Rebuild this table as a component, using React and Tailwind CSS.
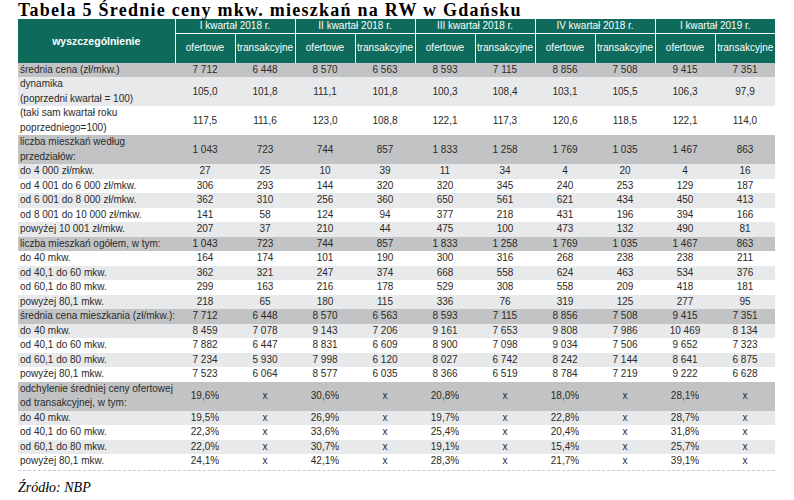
import React from 'react'

const quarters = ['I kwartał 2018 r.', 'II kwartał 2018 r.', 'III kwartał 2018 r.', 'IV kwartał 2018 r.', 'I kwartał 2019 r.']

// type: d = dark gray, l = light gray, w = white; tall = two-line label
const rows = [
  { label: 'średnia cena (zł/mkw.)', t: 'd', v: ['7 712', '6 448', '8 570', '6 563', '8 593', '7 115', '8 856', '7 508', '9 415', '7 351'] },
  { label: ['dynamika', '(poprzedni kwartał = 100)'], t: 'l', v: ['105,0', '101,8', '111,1', '101,8', '100,3', '108,4', '103,1', '105,5', '106,3', '97,9'] },
  { label: ['(taki sam kwartał roku', 'poprzedniego=100)'], t: 'w', v: ['117,5', '111,6', '123,0', '108,8', '122,1', '117,3', '120,6', '118,5', '122,1', '114,0'] },
  { label: ['liczba mieszkań według', 'przedziałów:'], t: 'd', v: ['1 043', '723', '744', '857', '1 833', '1 258', '1 769', '1 035', '1 467', '863'] },
  { label: 'do 4 000 zł/mkw.', t: 'l', v: ['27', '25', '10', '39', '11', '34', '4', '20', '4', '16'] },
  { label: 'od 4 001 do 6 000 zł/mkw.', t: 'w', v: ['306', '293', '144', '320', '320', '345', '240', '253', '129', '187'] },
  { label: 'od 6 001 do 8 000 zł/mkw.', t: 'l', v: ['362', '310', '256', '360', '650', '561', '621', '434', '450', '413'] },
  { label: 'od 8 001 do 10 000 zł/mkw.', t: 'w', v: ['141', '58', '124', '94', '377', '218', '431', '196', '394', '166'] },
  { label: 'powyżej 10 001 zł/mkw.', t: 'l', v: ['207', '37', '210', '44', '475', '100', '473', '132', '490', '81'] },
  { label: 'liczba mieszkań ogółem, w tym:', t: 'd', v: ['1 043', '723', '744', '857', '1 833', '1 258', '1 769', '1 035', '1 467', '863'] },
  { label: 'do 40 mkw.', t: 'w', v: ['164', '174', '101', '190', '300', '316', '268', '238', '238', '211'] },
  { label: 'od 40,1 do 60 mkw.', t: 'l', v: ['362', '321', '247', '374', '668', '558', '624', '463', '534', '376'] },
  { label: 'od 60,1 do 80 mkw.', t: 'w', v: ['299', '163', '216', '178', '529', '308', '558', '209', '418', '181'] },
  { label: 'powyżej 80,1 mkw.', t: 'l', v: ['218', '65', '180', '115', '336', '76', '319', '125', '277', '95'] },
  { label: 'średnia cena mieszkania (zł/mkw.):', t: 'd', v: ['7 712', '6 448', '8 570', '6 563', '8 593', '7 115', '8 856', '7 508', '9 415', '7 351'] },
  { label: 'do 40 mkw.', t: 'l', v: ['8 459', '7 078', '9 143', '7 206', '9 161', '7 653', '9 808', '7 986', '10 469', '8 134'] },
  { label: 'od 40,1 do 60 mkw.', t: 'w', v: ['7 882', '6 447', '8 831', '6 609', '8 900', '7 098', '9 034', '7 506', '9 652', '7 323'] },
  { label: 'od 60,1 do 80 mkw.', t: 'l', v: ['7 234', '5 930', '7 998', '6 120', '8 027', '6 742', '8 242', '7 144', '8 641', '6 875'] },
  { label: 'powyżej 80,1 mkw.', t: 'w', v: ['7 523', '6 064', '8 577', '6 035', '8 366', '6 519', '8 784', '7 219', '9 222', '6 628'] },
  { label: ['odchylenie średniej ceny ofertowej', 'od transakcyjnej, w tym:'], t: 'd', v: ['19,6%', 'x', '30,6%', 'x', '20,8%', 'x', '18,0%', 'x', '28,1%', 'x'] },
  { label: 'do 40 mkw.', t: 'l', v: ['19,5%', 'x', '26,9%', 'x', '19,7%', 'x', '22,8%', 'x', '28,7%', 'x'] },
  { label: 'od 40,1 do 60 mkw.', t: 'w', v: ['22,3%', 'x', '33,6%', 'x', '25,4%', 'x', '20,4%', 'x', '31,8%', 'x'] },
  { label: 'od 60,1 do 80 mkw.', t: 'l', v: ['22,0%', 'x', '30,7%', 'x', '19,1%', 'x', '15,4%', 'x', '25,7%', 'x'] },
  { label: 'powyżej 80,1 mkw.', t: 'w', v: ['24,1%', 'x', '42,1%', 'x', '28,3%', 'x', '21,7%', 'x', '39,1%', 'x'] },
]

const bg = { d: 'bg-[#c2c3c5]', l: 'bg-[#e8e9eb]', w: 'bg-white' }

export default function App() {
  return (
    <div className="w-[794px] h-[500px] bg-white overflow-hidden font-['Liberation_Sans',Arial,sans-serif] text-[#2a2a2a]">
      <div className="pl-[18px] pt-[1px]">
        <h1 className="font-['Liberation_Serif',serif] font-bold text-[18px] tracking-[1.25px] leading-[18px] text-black">
          Tabela 5 Średnie ceny mkw. mieszkań na RW w Gdańsku
        </h1>

        <table className="table-fixed border-collapse w-[757px] text-[10px] leading-[14px]">
          <colgroup>
            <col className="w-[157px]" />
            {Array.from({ length: 10 }).map((_, i) => (
              <col key={i} className="w-[60px]" />
            ))}
          </colgroup>
          <thead className="bg-[#0e6b5b] text-white">
            <tr className="h-[14px]">
              <th rowSpan={2} className="font-bold text-[10.5px] border-r border-white">
                wyszczególnienie
              </th>
              {quarters.map((q, i) => (
                <th key={q} colSpan={2} className={`font-normal border-b border-white ${i < 4 ? 'border-r' : ''}`}>
                  {q}
                </th>
              ))}
            </tr>
            <tr className="h-[29px]">
              {Array.from({ length: 10 }).map((_, i) => (
                <th key={i} className={`font-normal ${i < 9 ? 'border-r border-white' : ''}`}>
                  {i % 2 === 0 ? 'ofertowe' : 'transakcyjne'}
                </th>
              ))}
            </tr>
          </thead>
          <tbody>
            {rows.map((r, ri) => {
              const tall = Array.isArray(r.label)
              return (
                <tr key={ri} className={`${bg[r.t]} ${tall ? 'h-[29px]' : 'h-[14.5px]'}`}>
                  <td className="pl-[2px] text-left whitespace-nowrap">
                    {tall ? (
                      <div className="leading-[14.5px]">
                        <div>{r.label[0]}</div>
                        <div>{r.label[1]}</div>
                      </div>
                    ) : (
                      r.label
                    )}
                  </td>
                  {r.v.map((v, i) => (
                    <td key={i} className="text-center">
                      {v}
                    </td>
                  ))}
                </tr>
              )
            })}
          </tbody>
        </table>
        <div className="w-[757px] border-t border-dashed border-[#c8c8c8] mt-[1px]" />
        <div className="mt-[9px] font-['Liberation_Serif',serif] italic text-[14px] leading-[16px] text-black">
          Źródło: NBP
        </div>
      </div>
    </div>
  )
}
